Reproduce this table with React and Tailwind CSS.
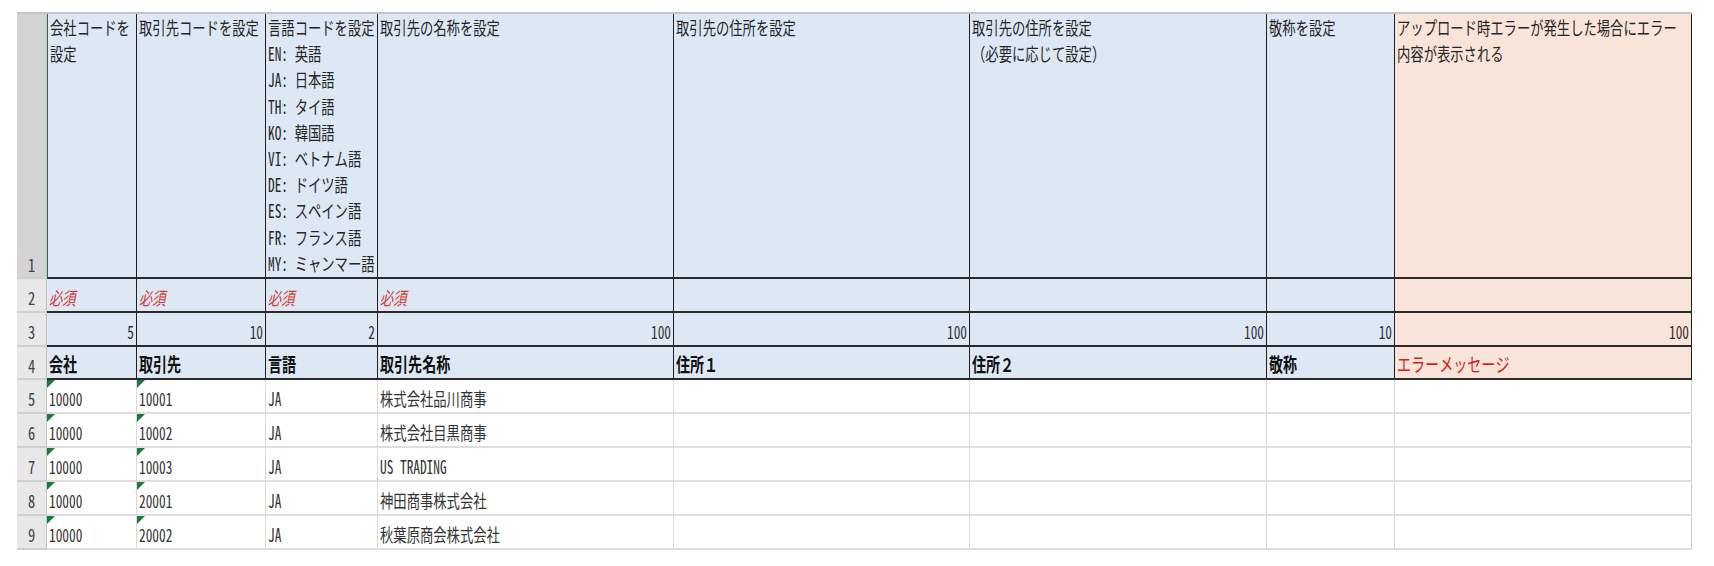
import React from 'react'

const GRID = 'grid grid-cols-[30px_90px_129px_112px_296px_296px_297px_128px_297px]'

// column fills for the header block (A..H)
const fills = ['bg-[#dde8f4]', 'bg-[#dde8f4]', 'bg-[#dde8f4]', 'bg-[#dde8f4]', 'bg-[#dde8f4]', 'bg-[#dde8f4]', 'bg-[#dde8f4]', 'bg-[#f8e4d8]']

const descriptions = [
  ['会社コードを', '設定'],
  ['取引先コードを設定'],
  ['言語コードを設定', 'EN: 英語', 'JA: 日本語', 'TH: タイ語', 'KO: 韓国語', 'VI: ベトナム語', 'DE: ドイツ語', 'ES: スペイン語', 'FR: フランス語', 'MY: ミャンマー語'],
  ['取引先の名称を設定'],
  ['取引先の住所を設定'],
  ['取引先の住所を設定', '（必要に応じて設定）'],
  ['敬称を設定'],
  ['アップロード時エラーが発生した場合にエラー', '内容が表示される'],
]

const required = ['必須', '必須', '必須', '必須', '', '', '', '']
const lengths = [5, 10, 2, 100, 100, 100, 10, 100]
const labels = ['会社', '取引先', '言語', '取引先名称', '住所１', '住所２', '敬称', 'エラーメッセージ']

const records = [
  ['10000', '10001', 'JA', '株式会社品川商事'],
  ['10000', '10002', 'JA', '株式会社目黒商事'],
  ['10000', '10003', 'JA', 'US TRADING'],
  ['10000', '20001', 'JA', '神田商事株式会社'],
  ['10000', '20002', 'JA', '秋葉原商会株式会社'],
]

// Narrow text, like the squeezed gothic face in the sheet
function T({ children, right = false, className = '' }) {
  return (
    <span
      className={`inline-block whitespace-nowrap scale-x-[0.74] ${right ? 'origin-right' : 'origin-left'} ${className}`}
    >
      {children}
    </span>
  )
}

function RowHead({ n, tall = false }) {
  return (
    <div
      className={`flex justify-center border-r border-b-2 border-b-[#cfcfcf] text-[#444] text-[18px] leading-none ${
        tall ? 'bg-[#d3d3d3] border-r-[#c4c4c4] items-end pb-[4px]' : 'bg-[#e8e8e8] border-r-[#c4c4c4] items-center pt-[4px]'
      }`}
    >
      <span className="inline-block scale-x-[0.8]">{n}</span>
    </div>
  )
}

function GreenTick() {
  return (
    <svg className="absolute left-0 top-0" width="8" height="8" viewBox="0 0 8 8">
      <polygon points="0,0 8,0 0,8" fill="#1e7a3c" />
    </svg>
  )
}

export default function App() {
  return (
    <div className="w-[1714px] h-[566px] bg-white pt-[12px] pl-[17px] font-['Noto_Sans_Mono_CJK_JP','Noto_Sans_CJK_JP',sans-serif] text-[#262626] overflow-hidden">
      <div className="w-[1675px] h-[2px] bg-[#c4c4c4]" />

      {/* row 1: descriptions */}
      <div className={`${GRID} h-[265px]`}>
        <RowHead n="1" tall />
        {descriptions.map((lines, i) => (
          <div
            key={i}
            className={`${fills[i]} border-r border-r-[#1f1f1f] border-b-2 border-b-[#2b2b2b] pl-[2px] text-[18px] leading-[26.2px] ${
              i === 0 ? 'border-l border-l-[#217346]' : ''
            }`}
          >
            {lines.map((l, j) => (
              <div key={j}>
                <T>{l}</T>
              </div>
            ))}
          </div>
        ))}
      </div>

      {/* row 2: required */}
      <div className={`${GRID} h-[34px]`}>
        <RowHead n="2" />
        {required.map((r, i) => (
          <div
            key={i}
            className={`${fills[i]} flex items-center pt-[4px] pl-[2px] border-r border-r-[#1f1f1f] border-b-2 border-b-[#2b2b2b] text-[18px] leading-none text-[#d23a3a] italic`}
          >
            <T>{r}</T>
          </div>
        ))}
      </div>

      {/* row 3: lengths */}
      <div className={`${GRID} h-[34px]`}>
        <RowHead n="3" />
        {lengths.map((n, i) => (
          <div
            key={i}
            className={`${fills[i]} flex items-center justify-end pt-[4px] pr-[2px] border-r border-r-[#1f1f1f] border-b-2 border-b-[#2b2b2b] text-[18px] leading-none text-[#333]`}
          >
            <T right>{n}</T>
          </div>
        ))}
      </div>

      {/* row 4: field labels */}
      <div className={`${GRID} h-[33px]`}>
        <RowHead n="4" />
        {labels.map((l, i) => (
          <div
            key={i}
            className={`${fills[i]} flex items-center pt-[2px] pl-[2px] border-r border-r-[#1f1f1f] border-b-2 border-b-[#2b2b2b] text-[19px] leading-none font-bold ${
              i === 7 ? 'text-[#d11f1f] font-normal' : 'text-[#111]'
            }`}
          >
            <T>{l}</T>
          </div>
        ))}
      </div>

      {/* data rows */}
      {records.map((rec, r) => (
        <div key={r} className={`${GRID} h-[34px]`}>
          <RowHead n={String(r + 5)} />
          {[0, 1, 2, 3, 4, 5, 6, 7].map((c) => (
            <div
              key={c}
              className={`relative flex items-center pt-[4px] pl-[2px] bg-white border-r border-b-2 border-b-[#dedede] text-[18px] leading-none text-[#333] ${
                c === 7 ? 'border-r-[#cfcfcf]' : 'border-r-[#dadada]'
              }`}
            >
              {c < 2 && <GreenTick />}
              {rec[c] && <T>{rec[c]}</T>}
            </div>
          ))}
        </div>
      ))}
    </div>
  )
}
